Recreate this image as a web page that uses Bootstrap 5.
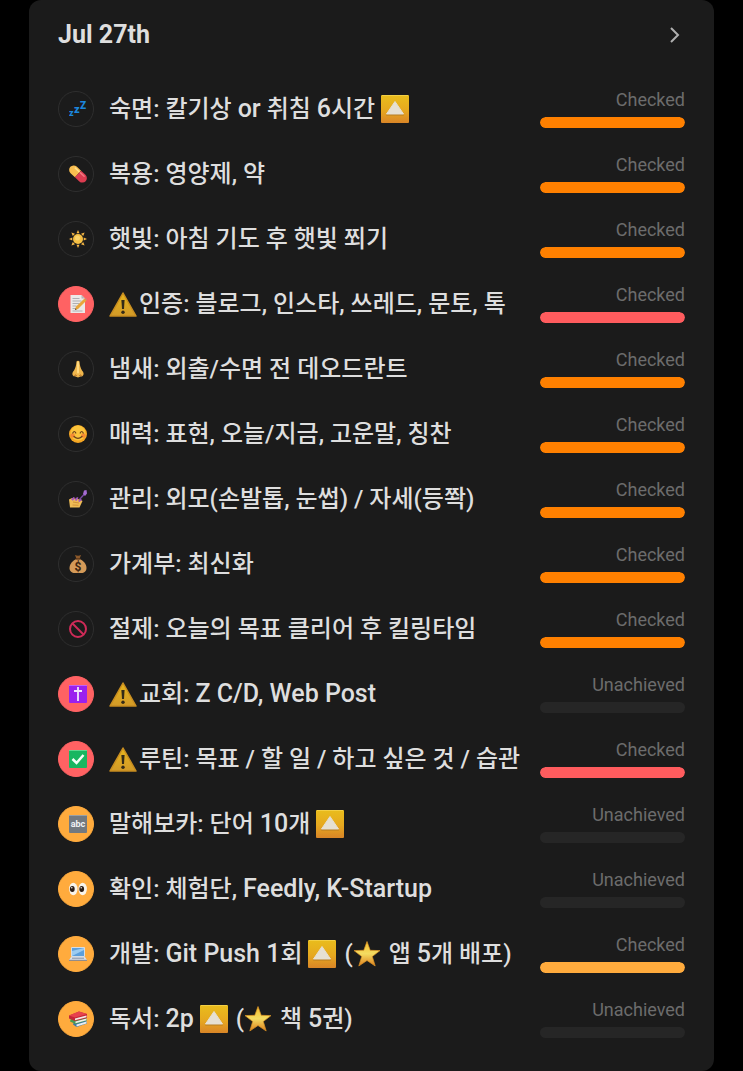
<!DOCTYPE html>
<html lang="ko">

<head>
    <meta charset="UTF-8" />
    <meta name="viewport" content="width=device-width, initial-scale=1.0" />
    <title>Jul 27th</title>
    <link href="https://cdn.jsdelivr.net/npm/bootstrap@5.3.3/dist/css/bootstrap.min.css" rel="stylesheet">
    <style>
        body {
            background-color: #000;
            color: #dedede;
            font-family: Roboto, "Noto Sans CJK KR", sans-serif;
        }

        .page {
            padding: 0 29px;
        }

        .day-card {
            background: #1b1b1b;
            border-radius: 12px;
            padding: 0 29px 20px;
        }

        .day-head {
            padding: 19px 0 25px;
        }

        .day-head h1 {
            font-size: 25px;
            line-height: 32px;
            font-weight: 700;
        }

        .next-btn {
            background: none;
            border: 0;
            width: 20px;
            height: 32px;
        }

        .habit {
            height: 65px;
            gap: 15px;
        }

        .habit-icon {
            width: 36px;
            height: 36px;
            padding-left: 4px;
            border: 1px solid #2e2e2e;
        }

        .habit-icon svg {
            width: 18px;
            height: 18px;
        }

        .habit-icon.red {
            background: #ff6263;
            border-color: #ff6263;
        }

        .habit-icon.amber {
            background: #ffab3d;
            border-color: #ffab3d;
        }

        .habit-name {
            font-size: 24px;
            line-height: 32px;
            font-weight: 500;
        }

        /* Roboto runs small next to the Korean face */
        .latin {
            font-size: 25px;
        }

        .emoji {
            width: 28px;
            height: 28px;
            margin-right: 2px;
            vertical-align: -6px;
        }

        .habit-state {
            width: 145px;
        }

        .state-text {
            font-size: 18px;
            line-height: 22px;
            color: #6c6c6c;
            margin-bottom: 6px;
        }

        .progress {
            --bs-progress-height: 11px;
            --bs-progress-bg: #262626;
            --bs-progress-border-radius: 6px;
        }

        .progress-bar {
            border-radius: 6px;
            background: #ff8000;
        }

        .progress-bar.red {
            background: #ff5c5e;
        }

        .progress-bar.amber {
            background: #ffab3d;
        }
    </style>
</head>

<body>
    <!-- shared emoji -->
    <svg class="position-absolute" width="0" height="0" aria-hidden="true">
        <defs>
            <linearGradient id="gold" x1="0" y1="0" x2="0" y2="1">
                <stop offset="0" stop-color="#e9bd1c" />
                <stop offset=".55" stop-color="#e6a81f" />
                <stop offset="1" stop-color="#d98527" />
            </linearGradient>
            <linearGradient id="warnFill" x1="0" y1="0" x2="0" y2="1">
                <stop offset="0" stop-color="#e6b51d" />
                <stop offset="1" stop-color="#d29a28" />
            </linearGradient>
            <linearGradient id="starFill" x1="0" y1="0" x2="0" y2="1">
                <stop offset="0" stop-color="#f4bd2c" />
                <stop offset=".5" stop-color="#f4dc62" />
                <stop offset="1" stop-color="#df7f1c" />
            </linearGradient>
        </defs>
        <symbol id="up" viewBox="0 0 28 28">
            <rect width="28" height="28" rx="1" fill="url(#gold)" />
            <path d="M1 .5h26" stroke="#f3cf45" />
            <path d="M14 7 23 20.500H5z" fill="#b67d22" />
            <path d="M14 6.500 22.500 19h-17z" fill="#e6e0d2" stroke="#e6e0d2" stroke-linejoin="round" />
        </symbol>
        <symbol id="warn" viewBox="0 0 28 28">
            <path d="M14 3 27 26H1z" fill="url(#warnFill)" stroke="#c88d20" stroke-width="1.500" stroke-linejoin="round" />
            <path d="M12.400 10h3.200l-.6 9h-2z" fill="#332a18" />
            <circle cx="14" cy="22.300" r="1.700" fill="#332a18" />
        </symbol>
        <symbol id="star" viewBox="0 0 28 28">
            <path d="m14 1.500 3.200 8.800 9.800.3-7.700 5.900 2.900 9.500L14 20.500 5.800 26l2.900-9.500L1 10.600l9.800-.3z"
                fill="url(#starFill)" stroke="#d99124" stroke-width=".7" stroke-linejoin="round" />
        </symbol>
    </svg>

    <main class="page">
        <section class="day-card">
            <header class="day-head d-flex justify-content-between align-items-center">
                <h1 class="m-0">Jul 27th</h1>
                <button type="button" class="next-btn d-flex align-items-center p-0" aria-label="Next">
                    <svg width="20" height="20" viewBox="0 0 20 20" fill="none" stroke="#b0b0b0" stroke-width="2">
                        <path d="m6 3 7 7-7 7" />
                    </svg>
                </button>
            </header>

            <ul class="list-unstyled m-0">
                <li class="habit d-flex align-items-center">
                    <span class="habit-icon rounded-circle d-flex align-items-center justify-content-center flex-shrink-0">
                        <svg viewBox="0 0 18 18" fill="#1c87dc" font-family="Roboto, sans-serif" font-weight="900">
                            <text x="0" y="15.500" font-size="9">z</text>
                            <text x="5" y="12.500" font-size="11">z</text>
                            <text x="11" y="8.500" font-size="10">Z</text>
                        </svg>
                    </span>
                    <span class="habit-name flex-grow-1 text-nowrap">숙면: 칼기상 <span class="latin">or</span> 취침 <span class="latin">6</span>시간 <svg class="emoji"><use href="#up" /></svg></span>
                    <div class="habit-state flex-shrink-0">
                        <div class="state-text text-end">Checked</div>
                        <div class="progress"><div class="progress-bar w-100"></div></div>
                    </div>
                </li>
                <li class="habit d-flex align-items-center">
                    <span class="habit-icon rounded-circle d-flex align-items-center justify-content-center flex-shrink-0">
                        <svg viewBox="0 0 18 18">
                            <g transform="rotate(43 9 9)">
                                <path d="M9 4.500H3a4.500 4.500 0 0 0 0 9h6z" fill="#f8bd50" />
                                <path d="M9 4.500h6a4.500 4.500 0 0 1 0 9H9z" fill="#dc3c50" />
                                <path d="M3 6.500h5" stroke="#ffe08c" stroke-width="1.500" stroke-linecap="round" />
                                <path d="M10 6.500h5" stroke="#f37880" stroke-width="1.500" stroke-linecap="round" />
                            </g>
                        </svg>
                    </span>
                    <span class="habit-name flex-grow-1 text-nowrap">복용: 영양제, 약</span>
                    <div class="habit-state flex-shrink-0">
                        <div class="state-text text-end">Checked</div>
                        <div class="progress"><div class="progress-bar w-100"></div></div>
                    </div>
                </li>
                <li class="habit d-flex align-items-center">
                    <span class="habit-icon rounded-circle d-flex align-items-center justify-content-center flex-shrink-0">
                        <svg viewBox="0 0 18 18">
                            <path d="M9 0l1.500 3.300h-3zM9 18l1.500-3.300h-3zM0 9l3.300-1.500v3zM18 9l-3.300-1.500v3zM2.400 2.400l3.600 1.400L3.800 6zM15.600 2.400 12 3.800 14.200 6zM2.400 15.600 6 14.200 3.800 12zM15.600 15.600 12 14.200l2.200-2.200z" fill="#f4b544" />
                            <circle cx="9" cy="9" r="5" fill="#f6c043" />
                            <circle cx="8.500" cy="8" r="2.500" fill="#fbd56c" />
                        </svg>
                    </span>
                    <span class="habit-name flex-grow-1 text-nowrap">햇빛: 아침 기도 후 햇빛 쬐기</span>
                    <div class="habit-state flex-shrink-0">
                        <div class="state-text text-end">Checked</div>
                        <div class="progress"><div class="progress-bar w-100"></div></div>
                    </div>
                </li>
                <li class="habit d-flex align-items-center">
                    <span class="habit-icon red rounded-circle d-flex align-items-center justify-content-center flex-shrink-0">
                        <svg viewBox="0 0 18 18">
                            <path d="M1.500 0h11L16 3.500V18H1.500z" fill="#ece9e7" />
                            <path d="M12.500 0v3.500H16z" fill="#bab6b4" />
                            <path d="M3.500 3.500h7M3.500 6h9M3.500 8.500h7M3.500 11h4M3.500 13.500h3M3.500 16h10" stroke="#a8a8ad" stroke-width=".9" />
                            <path d="m6 15 1-3.500 8.500-8 2 2-8.500 8.500z" fill="#e9a63a" />
                            <path d="m15.500 3.500 2 2 .5-1.500-1.200-1.200z" fill="#df7d78" />
                            <path d="m6 15 .5-1.800 1.200 1.100z" fill="#403229" />
                        </svg>
                    </span>
                    <span class="habit-name flex-grow-1 text-nowrap"><svg class="emoji"><use href="#warn" /></svg>인증: 블로그, 인스타, 쓰레드, 문토, 톡</span>
                    <div class="habit-state flex-shrink-0">
                        <div class="state-text text-end">Checked</div>
                        <div class="progress"><div class="progress-bar red w-100"></div></div>
                    </div>
                </li>
                <li class="habit d-flex align-items-center">
                    <span class="habit-icon rounded-circle d-flex align-items-center justify-content-center flex-shrink-0">
                        <svg viewBox="0 0 18 18">
                            <path d="M7.500 1.500C8 .5 10 .5 10.500 1.500c.3 4 1 6.500 2.500 9 2 2 2.300 4.500.3 5.700-1.300.5-2.300.2-3 .8-.8.6-1.800.6-2.600 0-.7-.6-1.700-.3-3-.8-2-1.200-1.700-3.700.3-5.700 1.500-2.500 2.200-5 2.500-9z" fill="#efb64c" />
                            <path d="M9 2.500v10" stroke="#ffd980" stroke-width="2" stroke-linecap="round" />
                            <path d="M5.500 15.500q1.200-1.500 2 .5M12.500 15.500q-1.200-1.500-2 .5" stroke="#a95f22" fill="none" />
                        </svg>
                    </span>
                    <span class="habit-name flex-grow-1 text-nowrap">냄새: 외출/수면 전 데오드란트</span>
                    <div class="habit-state flex-shrink-0">
                        <div class="state-text text-end">Checked</div>
                        <div class="progress"><div class="progress-bar w-100"></div></div>
                    </div>
                </li>
                <li class="habit d-flex align-items-center">
                    <span class="habit-icon rounded-circle d-flex align-items-center justify-content-center flex-shrink-0">
                        <svg viewBox="0 0 18 18">
                            <circle cx="9" cy="9" r="9" fill="#f5a623" />
                            <circle cx="9" cy="8" r="7.500" fill="#fbc53c" />
                            <circle cx="3.700" cy="10.500" r="2.200" fill="#f58a35" />
                            <circle cx="14.300" cy="10.500" r="2.200" fill="#f58a35" />
                            <path d="M3.800 8q1.500-3 3 0M11.200 8q1.500-3 3 0M5 11.500q4 3.800 8 0" fill="none" stroke="#69411c" stroke-width="1.200" stroke-linecap="round" />
                        </svg>
                    </span>
                    <span class="habit-name flex-grow-1 text-nowrap">매력: 표현, 오늘/지금, 고운말, 칭찬</span>
                    <div class="habit-state flex-shrink-0">
                        <div class="state-text text-end">Checked</div>
                        <div class="progress"><div class="progress-bar w-100"></div></div>
                    </div>
                </li>
                <li class="habit d-flex align-items-center">
                    <span class="habit-icon rounded-circle d-flex align-items-center justify-content-center flex-shrink-0">
                        <svg viewBox="0 0 18 18">
                            <path d="M0 9.500 3 8l8 1.500 2.500 1.500-3 6.500H1z" fill="#f0bd55" />
                            <path d="m4 12 6 1M3.500 15l6 .3" stroke="#c98631" stroke-width=".8" />
                            <path d="M2 9.500 4.500 7l1.500.8-2 3zM5.500 10l2.500-3 1.500.8-2 3.200zM9 11l2.500-2.500L13 10l-2.500 2z" fill="#a558bd" />
                            <path d="m10.500 9.500 4.500-5" stroke="#7c4aa5" stroke-width="1.300" />
                            <path d="m14 4 1-3.500 2.500-.5.5 3.500-2 2.500z" fill="#a46bd2" />
                        </svg>
                    </span>
                    <span class="habit-name flex-grow-1 text-nowrap">관리: 외모(손발톱, 눈썹) / 자세(등쫙)</span>
                    <div class="habit-state flex-shrink-0">
                        <div class="state-text text-end">Checked</div>
                        <div class="progress"><div class="progress-bar w-100"></div></div>
                    </div>
                </li>
                <li class="habit d-flex align-items-center">
                    <span class="habit-icon rounded-circle d-flex align-items-center justify-content-center flex-shrink-0">
                        <svg viewBox="0 0 18 18">
                            <path d="M6 0q3 1.500 6 0l-1.500 4h-3z" fill="#8d5a2b" />
                            <path d="M7 4h4c3 1.500 6.500 5 6.500 9 0 3.500-2.500 5-5 5h-7c-2.500 0-5-1.500-5-5 0-4 3.500-7.500 6.500-9z" fill="#d49a58" />
                            <path d="M6.500 4h5" stroke="#55331a" stroke-width="1.300" />
                            <text x="9" y="15.500" text-anchor="middle" font-family="Roboto, sans-serif" font-size="12" font-weight="700" fill="#3b2411">$</text>
                        </svg>
                    </span>
                    <span class="habit-name flex-grow-1 text-nowrap">가계부: 최신화</span>
                    <div class="habit-state flex-shrink-0">
                        <div class="state-text text-end">Checked</div>
                        <div class="progress"><div class="progress-bar w-100"></div></div>
                    </div>
                </li>
                <li class="habit d-flex align-items-center">
                    <span class="habit-icon rounded-circle d-flex align-items-center justify-content-center flex-shrink-0">
                        <svg viewBox="0 0 18 18" fill="none" stroke="#cf2b58" stroke-width="2">
                            <circle cx="9" cy="9" r="8" />
                            <path d="m3.500 3.500 11 11" />
                        </svg>
                    </span>
                    <span class="habit-name flex-grow-1 text-nowrap">절제: 오늘의 목표 클리어 후 킬링타임</span>
                    <div class="habit-state flex-shrink-0">
                        <div class="state-text text-end">Checked</div>
                        <div class="progress"><div class="progress-bar w-100"></div></div>
                    </div>
                </li>
                <li class="habit d-flex align-items-center">
                    <span class="habit-icon red rounded-circle d-flex align-items-center justify-content-center flex-shrink-0">
                        <svg viewBox="0 0 18 18">
                            <rect width="18" height="18" rx="1" fill="#9a20ee" />
                            <path d="M0 .5h18" stroke="#c15ff8" />
                            <path d="M9 2v14M5 6h8" stroke="#f2e4fb" stroke-width="1.800" />
                        </svg>
                    </span>
                    <span class="habit-name flex-grow-1 text-nowrap"><svg class="emoji"><use href="#warn" /></svg>교회: <span class="latin">Z C/D, Web Post</span></span>
                    <div class="habit-state flex-shrink-0">
                        <div class="state-text text-end">Unachieved</div>
                        <div class="progress"></div>
                    </div>
                </li>
                <li class="habit d-flex align-items-center">
                    <span class="habit-icon red rounded-circle d-flex align-items-center justify-content-center flex-shrink-0">
                        <svg viewBox="0 0 18 18">
                            <rect width="18" height="18" rx="1" fill="#18b660" />
                            <path d="M0 .5h18" stroke="#5ed68f" />
                            <path d="m3.500 9 4 4 7-8" fill="none" stroke="#f3fff7" stroke-width="2.500" />
                        </svg>
                    </span>
                    <span class="habit-name flex-grow-1 text-nowrap"><svg class="emoji"><use href="#warn" /></svg>루틴: 목표 / 할 일 / 하고 싶은 것 / 습관</span>
                    <div class="habit-state flex-shrink-0">
                        <div class="state-text text-end">Checked</div>
                        <div class="progress"><div class="progress-bar red w-100"></div></div>
                    </div>
                </li>
                <li class="habit d-flex align-items-center">
                    <span class="habit-icon amber rounded-circle d-flex align-items-center justify-content-center flex-shrink-0">
                        <svg viewBox="0 0 18 18">
                            <rect width="18" height="18" rx="1" fill="#727980" />
                            <path d="M0 .5h18" stroke="#989fa5" />
                            <text x="9" y="12" text-anchor="middle" font-family="Roboto, sans-serif" font-size="9" font-weight="700" fill="#eef1f3">abc</text>
                        </svg>
                    </span>
                    <span class="habit-name flex-grow-1 text-nowrap">말해보카: 단어 <span class="latin">10</span>개 <svg class="emoji"><use href="#up" /></svg></span>
                    <div class="habit-state flex-shrink-0">
                        <div class="state-text text-end">Unachieved</div>
                        <div class="progress"></div>
                    </div>
                </li>
                <li class="habit d-flex align-items-center">
                    <span class="habit-icon amber rounded-circle d-flex align-items-center justify-content-center flex-shrink-0">
                        <svg viewBox="0 0 18 18">
                            <ellipse cx="4.300" cy="9" rx="4.200" ry="6.200" fill="#f8f4ec" />
                            <ellipse cx="13.700" cy="9" rx="4.200" ry="6.200" fill="#f8f4ec" />
                            <ellipse cx="3.300" cy="9" rx="2.400" ry="3" fill="#2b1d16" />
                            <ellipse cx="12.700" cy="9" rx="2.400" ry="3" fill="#2b1d16" />
                            <circle cx="2.800" cy="7.800" r=".7" fill="#fff" />
                            <circle cx="12.200" cy="7.800" r=".7" fill="#fff" />
                        </svg>
                    </span>
                    <span class="habit-name flex-grow-1 text-nowrap">확인: 체험단, <span class="latin">Feedly, K-Startup</span></span>
                    <div class="habit-state flex-shrink-0">
                        <div class="state-text text-end">Unachieved</div>
                        <div class="progress"></div>
                    </div>
                </li>
                <li class="habit d-flex align-items-center">
                    <span class="habit-icon amber rounded-circle d-flex align-items-center justify-content-center flex-shrink-0">
                        <svg viewBox="0 0 18 18">
                            <rect x="2" y="2" width="14" height="10" rx="1" fill="#d5dce4" />
                            <path d="M3 3h12v8H3z" fill="#5c9fdb" />
                            <path d="M3 11V6l12-3v2z" fill="#9ccbf0" />
                            <path d="M2 12h14l2 3H0z" fill="#d9dee7" />
                            <path d="M3 13.200h12" stroke="#8692a5" />
                            <path d="M0 15.300h18" stroke="#77859f" />
                        </svg>
                    </span>
                    <span class="habit-name flex-grow-1 text-nowrap">개발: <span class="latin">Git Push 1</span>회 <svg class="emoji"><use href="#up" /></svg> (<svg class="emoji"><use href="#star" /></svg> 앱 <span class="latin">5</span>개 배포)</span>
                    <div class="habit-state flex-shrink-0">
                        <div class="state-text text-end">Checked</div>
                        <div class="progress"><div class="progress-bar amber w-100"></div></div>
                    </div>
                </li>
                <li class="habit d-flex align-items-center">
                    <span class="habit-icon amber rounded-circle d-flex align-items-center justify-content-center flex-shrink-0">
                        <svg viewBox="0 0 18 18">
                            <path d="m5 12 12-2 1 3.500L7.500 17 4 14.500z" fill="#3c78a4" />
                            <path d="m7.500 14.500 10-3v2l-10 3z" fill="#e9edf0" />
                            <path d="m2 8.500 14-1.500 2 2v1.500L6.500 14 1 11.500z" fill="#4c9a52" />
                            <path d="m6.500 11.500 11-3v1.700l-11 3z" fill="#f2eee9" />
                            <path d="m0 5.500 10-4L18 4v4L6 11 0 8.500z" fill="#c52636" />
                            <path d="m6 8.500 11.500-3v1.700L6 10.200z" fill="#f4e9e6" />
                            <path d="m0 5.500 10-4L18 4 6 7.500z" fill="#e8424e" />
                        </svg>
                    </span>
                    <span class="habit-name flex-grow-1 text-nowrap">독서: <span class="latin">2p</span> <svg class="emoji"><use href="#up" /></svg> (<svg class="emoji"><use href="#star" /></svg> 책 <span class="latin">5</span>권)</span>
                    <div class="habit-state flex-shrink-0">
                        <div class="state-text text-end">Unachieved</div>
                        <div class="progress"></div>
                    </div>
                </li>
            </ul>
        </section>
    </main>

    <script src="https://cdn.jsdelivr.net/npm/bootstrap@5.3.3/dist/js/bootstrap.bundle.min.js"></script>
</body>

</html>
